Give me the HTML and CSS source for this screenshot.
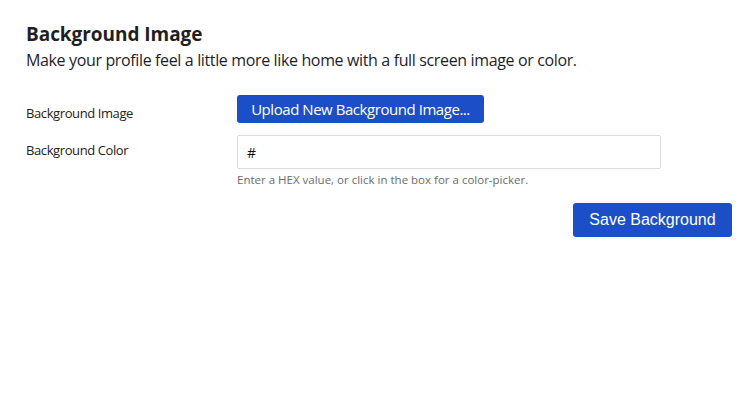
FILE: index.html
```html
<!DOCTYPE html>
<html lang="en">
<head>
<meta charset="utf-8">
<title>Background Image</title>
<link rel="stylesheet" href="styles.css">
</head>
<body>
<main class="panel">
  <h2 class="title">Background Image</h2>
  <p class="subtitle">Make your profile feel a little more like home with a full screen image or color.</p>
  <form class="form">
    <div class="row">
      <label class="label label-image">Background Image</label>
      <div class="control">
        <button type="button" class="btn btn-upload">Upload New Background Image...</button>
      </div>
    </div>
    <div class="row row-color">
      <label class="label label-color" for="bg">Background Color</label>
      <div class="control">
        <input id="bg" class="input" type="text" value="#">
        <div class="help">Enter a HEX value, or click in the box for a color-picker.</div>
      </div>
    </div>
    <div class="actions">
      <button type="button" class="btn btn-save">Save Background</button>
    </div>
  </form>
</main>
</body>
</html>
```
FILE: styles.css
```css
html, body {
  margin: 0;
  padding: 0;
  background: #ffffff;
}
body {
  font-family: "Open Sans", "Noto Sans", sans-serif;
  color: #212529;
}
.panel {
  padding: 22px 16px 0 26px;
}
.title {
  margin: 0;
  font-size: 19px;
  line-height: 24px;
  font-weight: 700;
  color: #1f1f1f;
  letter-spacing: -0.05px;
}
.subtitle {
  margin: 3px 0 0;
  font-size: 16px;
  line-height: 22px;
  color: #1e1e2a;
  letter-spacing: -0.36px;
}
.form {
  margin-top: 24px;
}
.row {
  display: grid;
  grid-template-columns: 211px 424px;
}
.row-color {
  margin-top: 12px;
}
.label {
  font-size: 13px;
  line-height: 18px;
  color: #222;
  letter-spacing: -0.4px;
}
.label-image { padding-top: 9px; }
.label-color { padding-top: 6px; }
.control {
  display: flex;
  flex-direction: column;
  align-items: flex-start;
}
.btn {
  border: none;
  border-radius: 3px;
  background: #1c4fc7;
  color: #ffffff;
  cursor: pointer;
}
.btn-upload {
  height: 28px;
  width: 247px;
  padding: 0;
  font-family: "Open Sans", "Noto Sans", sans-serif;
  font-size: 15px;
  letter-spacing: -0.45px;
}
.input {
  box-sizing: border-box;
  width: 424px;
  height: 34px;
  margin: 0;
  padding: 0 9px;
  border: 1px solid #dcdcdc;
  border-radius: 2px;
  font-family: "Open Sans", "Noto Sans", sans-serif;
  font-size: 14px;
  color: #111;
  outline: none;
}
.help {
  margin-top: 3px;
  font-size: 11.5px;
  line-height: 15px;
  color: #6b6b6b;
  letter-spacing: 0;
}
.actions {
  display: flex;
  justify-content: flex-end;
  margin-top: 16px;
}
.btn-save {
  height: 34px;
  width: 159px;
  padding: 0;
  font-family: "Liberation Sans", Arial, sans-serif;
  font-size: 16px;
}
```
